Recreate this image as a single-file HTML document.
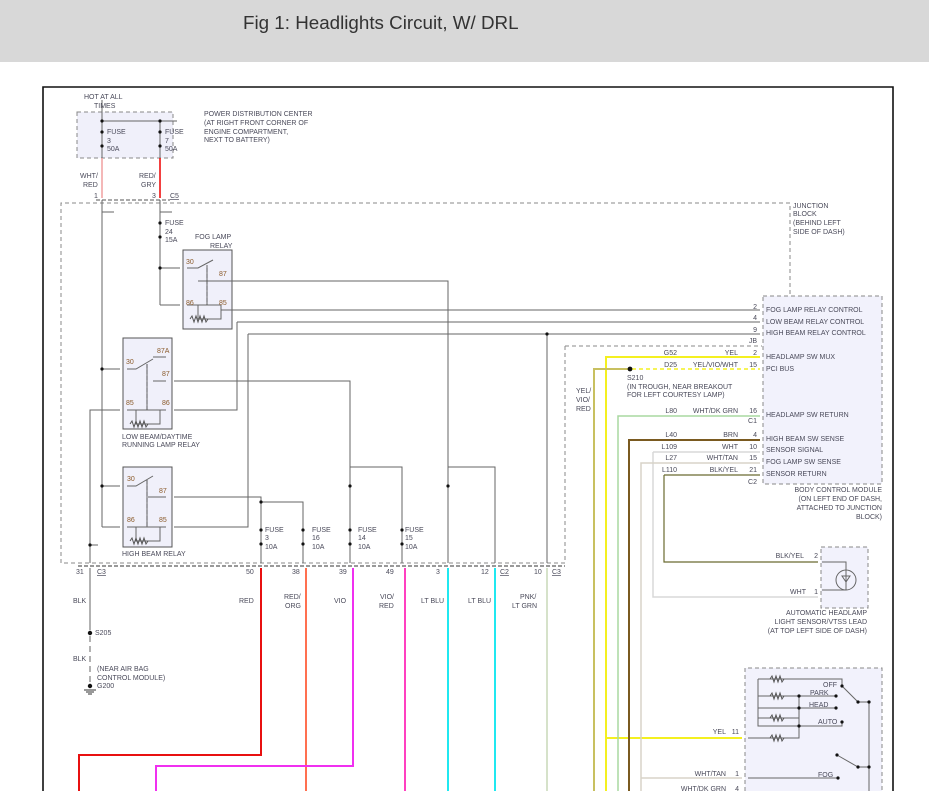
<!DOCTYPE html>
<html><head><meta charset="utf-8"><style>
html,body{margin:0;padding:0;background:#fff;width:929px;height:804px;overflow:hidden}
.hdr{position:absolute;left:0;top:0;width:929px;height:62px;background:#d8d8d8}
.hdr span{position:absolute;left:243px;top:12px;font:18.8px "Liberation Sans",sans-serif;color:#333}
svg{position:absolute;left:0;top:0}
text{font-family:"Liberation Sans",sans-serif;font-size:7px;fill:#4a4a5a}
.p{fill:#8a5a2a}
</style></head><body>
<div class="hdr"><span>Fig 1: Headlights Circuit, W/ DRL</span></div>
<svg width="929" height="804" viewBox="0 0 929 804">
<g fill="none" stroke-width="1">
<path d="M43 791V87H893V791" stroke="#111" stroke-width="1.6"/>
<rect x="77" y="112" width="96" height="46" fill="#f0f0fa" stroke="#888" stroke-dasharray="4,3"/>
<path d="M61 563V203H790V296M565 346H762M565 346V563H61" stroke="#888" stroke-dasharray="4,3"/>
<rect x="763" y="296" width="119" height="188" fill="#f2f2fc" stroke="#888" stroke-dasharray="4,3"/>
<rect x="821" y="547" width="47" height="61" fill="#f2f2fc" stroke="#888" stroke-dasharray="4,3"/>
<path d="M745 791V668H882V791" fill="#f2f2fc" stroke="#888" stroke-dasharray="4,3"/>
<rect x="183" y="250" width="49" height="79" fill="#f0f0fa" stroke="#555"/>
<rect x="123" y="338" width="49" height="91" fill="#f0f0fa" stroke="#555"/>
<rect x="123" y="467" width="49" height="80" fill="#f0f0fa" stroke="#555"/>

<g stroke="#666">
<path d="M102 100V158M102 121H177M160 121V158"/>
<path d="M102 200V527M160 200V305M102 212H114M160 212H172"/>
<path d="M160 268H180M160 305H180"/>
<path d="M221 281H448V563M221 310H760M237 322H760M237 322V410H174M248 334H760M248 334V527H174"/>
<path d="M102 369H120M102 486H120M102 527H120"/>
<path d="M90 563V410H120M90 545H98"/>
<path d="M174 381H350V563M350 467H402V563M174 497H261V563M261 502H303V563M448 467H495V563M547 334V563"/>
<path d="M187 268H198l15-8M207 265V305M198 281H221M198 305H221M187 305H221M198 305v14h23v-14"/>
<path d="M127 369H136l17-10M147 364V410M153 357H166M153 381H166M127 410H166M136 410v14h24v-14"/>
<path d="M127 486H136l17-10M147 480V527M148 497H166M127 527H166M136 527v14h24v-14"/>
<path d="M822 562H846V590H822M846 562V570"/>
<circle cx="846" cy="580" r="10"/>
<path d="M842 576h8l-4 6z"/>
<path d="M758 679H842V686M758 679V696H799M758 696V708H799M758 708V718H799M758 718V726H799M748 738H799V696M799 696H836M799 708H836M799 726H842V722M842 686L858 702H869V791M837 755L858 767H869M748 778H838"/>
</g>
<g stroke="#555"><path d="M190 319l2-3 2 6 2-6 2 6 2-6 2 6 2-6 2 6 2-3"/><path d="M130 424l2-3 2 6 2-6 2 6 2-6 2 6 2-6 2 6 2-3"/><path d="M130 541l2-3 2 6 2-6 2 6 2-6 2 6 2-6 2 6 2-3"/>
<path d="M770 679l2-3 2 6 2-6 2 6 2-6 2 6 2-3M770 696l2-3 2 6 2-6 2 6 2-6 2 6 2-3M770 718l2-3 2 6 2-6 2 6 2-6 2 6 2-3M770 738l2-3 2 6 2-6 2 6 2-6 2 6 2-3"/></g>
<g stroke="#555" stroke-dasharray="4,2"><path d="M207 268V305M147 364V410M147 480V527"/></g>
<path d="M102 158V198" stroke="#f0a0a0" stroke-width="1.5"/>
<path d="M160 158V198" stroke="#e00" stroke-width="1.5"/>
<path d="M90 568V630" stroke="#666"/>
<path d="M90 636V684" stroke="#666" stroke-dasharray="6,4"/>
<path d="M261 568V755H79V791" stroke="#e81010" stroke-width="2"/>
<path d="M306 568V791" stroke="#ff7050" stroke-width="2"/>
<path d="M353 568V766H156V791" stroke="#f030f0" stroke-width="2"/>
<path d="M405 568V791" stroke="#ff40c0" stroke-width="2"/>
<path d="M448 568V791" stroke="#20e8f0" stroke-width="2"/>
<path d="M495 568V791" stroke="#20e8f0" stroke-width="2"/>
<path d="M547 568V791" stroke="#c8d8b8" stroke-width="1.5"/>
<path d="M606 791V738H742M606 738V357H760" stroke="#f4f020" stroke-width="2"/>
<path d="M594 791V369H629" stroke="#c8c060" stroke-width="2"/>
<path d="M632 369H760" stroke="#f4f020" stroke-width="1.5" stroke-dasharray="4,3"/>
<path d="M618 791V416H760" stroke="#a8d8a0" stroke-width="1.5"/>
<path d="M629 791V440H760" stroke="#7a5a20" stroke-width="2"/>
<path d="M653 452H760M653 452V597H818" stroke="#d8d8d8" stroke-width="1.5"/>
<path d="M641 791V463H760M641 778H742" stroke="#d8d4c8" stroke-width="1.5"/>
<path d="M664 475H760M664 475V562H818" stroke="#6a6a30" stroke-width="1.2"/>
<path d="M78 566H565" stroke="#333" stroke-dasharray="4,2"/>
<path d="M96 200H170" stroke="#555" stroke-dasharray="4,2"/>
</g>
<g fill="#111">
<circle cx="102" cy="121" r="1.6"/><circle cx="160" cy="121" r="1.6"/>
<circle cx="102" cy="132" r="1.6"/><circle cx="102" cy="146" r="1.6"/><circle cx="160" cy="132" r="1.6"/><circle cx="160" cy="146" r="1.6"/>
<circle cx="160" cy="223" r="1.6"/><circle cx="160" cy="237" r="1.6"/><circle cx="160" cy="268" r="1.6"/>
<circle cx="102" cy="369" r="1.6"/><circle cx="102" cy="486" r="1.6"/><circle cx="90" cy="545" r="1.6"/>
<circle cx="261" cy="502" r="1.6"/><circle cx="350" cy="486" r="1.6"/><circle cx="448" cy="486" r="1.6"/><circle cx="547" cy="334" r="1.6"/>
<circle cx="261" cy="530" r="1.6"/><circle cx="261" cy="544" r="1.6"/><circle cx="303" cy="530" r="1.6"/><circle cx="303" cy="544" r="1.6"/>
<circle cx="350" cy="530" r="1.6"/><circle cx="350" cy="544" r="1.6"/><circle cx="402" cy="530" r="1.6"/><circle cx="402" cy="544" r="1.6"/>
<circle cx="90" cy="633" r="2.2"/><circle cx="90" cy="686" r="2.2"/><circle cx="630" cy="369" r="2.4"/>
<circle cx="799" cy="696" r="1.6"/><circle cx="799" cy="708" r="1.6"/><circle cx="799" cy="726" r="1.6"/>
<circle cx="836" cy="696" r="1.6"/><circle cx="836" cy="708" r="1.6"/><circle cx="842" cy="686" r="1.6"/><circle cx="842" cy="722" r="1.6"/><circle cx="858" cy="702" r="1.6"/><circle cx="869" cy="702" r="1.6"/>
<circle cx="837" cy="755" r="1.6"/><circle cx="858" cy="767" r="1.6"/><circle cx="869" cy="767" r="1.6"/><circle cx="838" cy="778" r="1.6"/>
</g>
<path d="M84 690h12M86 692h8M88 694h4" stroke="#333"/>
<text x="84" y="99">HOT AT ALL</text><text x="94" y="108">TIMES</text>
<text x="204" y="116">POWER DISTRIBUTION CENTER</text><text x="204" y="125">(AT RIGHT FRONT CORNER OF</text><text x="204" y="134">ENGINE COMPARTMENT,</text><text x="204" y="142">NEXT TO BATTERY)</text>
<text x="107" y="134">FUSE</text><text x="107" y="143">3</text><text x="107" y="151">50A</text>
<text x="165" y="134">FUSE</text><text x="165" y="143">7</text><text x="165" y="151">50A</text>
<text x="80" y="178">WHT/</text><text x="83" y="187">RED</text><text x="139" y="178">RED/</text><text x="141" y="187">GRY</text>
<text x="94" y="198">1</text><text x="152" y="198">3</text><text x="170" y="198" text-decoration="underline">C5</text>
<text x="793" y="208">JUNCTION</text><text x="793" y="216">BLOCK</text><text x="793" y="225">(BEHIND LEFT</text><text x="793" y="234">SIDE OF DASH)</text>
<text x="165" y="225">FUSE</text><text x="165" y="234">24</text><text x="165" y="242">15A</text>
<text x="195" y="239">FOG LAMP</text><text x="210" y="248">RELAY</text>
<text class="p" x="186" y="264">30</text><text class="p" x="219" y="276">87</text><text class="p" x="186" y="305">86</text><text class="p" x="219" y="305">85</text>
<text class="p" x="157" y="353">87A</text><text class="p" x="126" y="364">30</text><text class="p" x="162" y="376">87</text><text class="p" x="126" y="405">85</text><text class="p" x="162" y="405">86</text>
<text x="122" y="439">LOW BEAM/DAYTIME</text><text x="122" y="447">RUNNING LAMP RELAY</text>
<text class="p" x="127" y="481">30</text><text class="p" x="159" y="493">87</text><text class="p" x="127" y="522">86</text><text class="p" x="159" y="522">85</text>
<text x="122" y="556">HIGH BEAM RELAY</text>
<text x="265" y="532">FUSE</text><text x="265" y="540">3</text><text x="265" y="549">10A</text>
<text x="312" y="532">FUSE</text><text x="312" y="540">16</text><text x="312" y="549">10A</text>
<text x="358" y="532">FUSE</text><text x="358" y="540">14</text><text x="358" y="549">10A</text>
<text x="405" y="532">FUSE</text><text x="405" y="540">15</text><text x="405" y="549">10A</text>
<text x="76" y="574">31</text><text x="97" y="574" text-decoration="underline">C3</text>
<text x="246" y="574">50</text><text x="292" y="574">38</text><text x="339" y="574">39</text><text x="386" y="574">49</text><text x="436" y="574">3</text><text x="481" y="574">12</text><text x="500" y="574" text-decoration="underline">C2</text><text x="534" y="574">10</text><text x="552" y="574" text-decoration="underline">C3</text>
<text x="73" y="603">BLK</text><text x="239" y="603">RED</text><text x="284" y="599">RED/</text><text x="285" y="608">ORG</text><text x="334" y="603">VIO</text><text x="380" y="599">VIO/</text><text x="379" y="608">RED</text>
<text x="421" y="603">LT BLU</text><text x="468" y="603">LT BLU</text><text x="520" y="599">PNK/</text><text x="512" y="608">LT GRN</text>
<text x="95" y="635">S205</text><text x="73" y="661">BLK</text><text x="97" y="671">(NEAR AIR BAG</text><text x="97" y="680">CONTROL MODULE)</text><text x="97" y="688">G200</text>
<text x="766" y="312">FOG LAMP RELAY CONTROL</text><text x="766" y="324">LOW BEAM RELAY CONTROL</text><text x="766" y="335">HIGH BEAM RELAY CONTROL</text>
<text x="766" y="359">HEADLAMP SW MUX</text><text x="766" y="371">PCI BUS</text><text x="766" y="417">HEADLAMP SW RETURN</text>
<text x="766" y="441">HIGH BEAM SW SENSE</text><text x="766" y="452">SENSOR SIGNAL</text><text x="766" y="464">FOG LAMP SW SENSE</text><text x="766" y="476">SENSOR RETURN</text>
<g text-anchor="end">
<text x="757" y="309">2</text><text x="757" y="320">4</text><text x="757" y="332">9</text><text x="757" y="343">JB</text>
<text x="757" y="355">2</text><text x="757" y="367">15</text><text x="757" y="413">16</text><text x="757" y="423">C1</text>
<text x="757" y="437">4</text><text x="757" y="449">10</text><text x="757" y="460">15</text><text x="757" y="472">21</text><text x="757" y="484">C2</text>
<text x="677" y="355">G52</text><text x="738" y="355">YEL</text><text x="677" y="367">D25</text><text x="738" y="367">YEL/VIO/WHT</text>
<text x="677" y="413">L80</text><text x="738" y="413">WHT/DK GRN</text><text x="677" y="437">L40</text><text x="738" y="437">BRN</text>
<text x="677" y="449">L109</text><text x="738" y="449">WHT</text><text x="677" y="460">L27</text><text x="738" y="460">WHT/TAN</text>
<text x="677" y="472">L110</text><text x="738" y="472">BLK/YEL</text>
<text x="882" y="492">BODY CONTROL MODULE</text><text x="882" y="501">(ON LEFT END OF DASH,</text><text x="882" y="510">ATTACHED TO JUNCTION</text><text x="882" y="519">BLOCK)</text>
<text x="804" y="558">BLK/YEL</text><text x="818" y="558">2</text><text x="806" y="594">WHT</text><text x="818" y="594">1</text>
<text x="867" y="615">AUTOMATIC HEADLAMP</text><text x="867" y="624">LIGHT SENSOR/VTSS LEAD</text><text x="867" y="633">(AT TOP LEFT SIDE OF DASH)</text>
<text x="726" y="734">YEL</text><text x="739" y="734">11</text><text x="726" y="776">WHT/TAN</text><text x="739" y="776">1</text><text x="726" y="791">WHT/DK GRN</text><text x="739" y="791">4</text>
</g>
<text x="576" y="393">YEL/</text><text x="576" y="402">VIO/</text><text x="576" y="411">RED</text>
<text x="627" y="380">S210</text><text x="627" y="389">(IN TROUGH, NEAR BREAKOUT</text><text x="627" y="397">FOR LEFT COURTESY LAMP)</text>
<text x="823" y="687">OFF</text><text x="810" y="695">PARK</text><text x="809" y="707">HEAD</text><text x="818" y="724">AUTO</text><text x="818" y="777">FOG</text>
</svg>
</body></html>
